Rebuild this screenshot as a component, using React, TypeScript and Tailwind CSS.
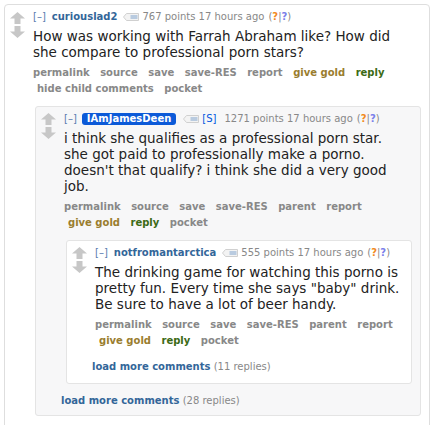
import React from "react";
import clsx from "clsx";

type Btn = { label: string; tone?: "gold" | "reply" };

const baseButtons: Btn[] = [
  { label: "permalink" },
  { label: "source" },
  { label: "save" },
  { label: "save-RES" },
];

function Arrows() {
  return (
    <div className="flex w-[15px] shrink-0 flex-col items-center gap-[2px] pt-[6.5px]">
      <svg width="15" height="12" viewBox="0 0 15 12">
        <path d="M7.5 0 L15 6.5 H10.5 V12 H4.5 V6.5 H0 Z" fill="#c7c7c7" />
      </svg>
      <svg width="15" height="12" viewBox="0 0 15 12">
        <path d="M7.5 12 L15 5.5 H10.5 V0 H4.5 V5.5 H0 Z" fill="#c7c7c7" />
      </svg>
    </div>
  );
}

function TagIcon() {
  return (
    <svg width="16" height="8" viewBox="0 0 16 8" className="shrink-0">
      <path d="M0.5 4 L3.5 0.5 H15.5 V7.5 H3.5 Z" fill="#f3f3f3" stroke="#d0d0d0" />
      <rect x="7.5" y="2" width="7" height="4" fill="#b9cbe0" />
    </svg>
  );
}

function Tagline({ author, points, submitter }: { author: string; points: string; submitter?: boolean }) {
  return (
    <div className="mt-[6px] flex items-center whitespace-nowrap text-[10px] leading-[12px] text-[#888]">
      <span className="text-[#5a7bb0]">[–]</span>
      {submitter ? (
        <span className="ml-[5px] rounded-[3px] bg-[#0c5ad8] px-[5px] font-bold text-white">{author}</span>
      ) : (
        <span className="ml-[6px] font-bold text-[#336699]">{author}</span>
      )}
      <span className={submitter ? "ml-[6.5px]" : "ml-[5.5px]"}>
        <TagIcon />
      </span>
      {submitter && <span className="ml-[3.5px] text-[#0055df]">[S]</span>}
      <span className={submitter ? "ml-[8px]" : "ml-[3.5px]"}>{points} points 17 hours ago</span>
      <span className="ml-[4px]">
        (<b className="text-[#f28a1e]">?</b>|<b className="text-[#7b80ea]">?</b>)
      </span>
    </div>
  );
}

function Buttons({ items }: { items: Btn[] }) {
  return (
    <ul className="mt-[4px] flex flex-wrap text-[10px] font-bold leading-[16px] text-[#888]">
      {items.map((b, i) => (
        <li
          key={b.label}
          className={clsx(
            i === 0 ? "pl-0" : "pl-[4px]",
            "mr-[2.5px] whitespace-nowrap pr-[4px]",
            b.tone === "gold" && "text-[#9a7d2e]",
            b.tone === "reply" && "text-[#3b6a14]"
          )}
        >
          {b.label}
        </li>
      ))}
    </ul>
  );
}

function Body({ children }: { children: React.ReactNode }) {
  return <p className="mt-[5px] text-[13.5px] leading-[16.3px] text-[#222]">{children}</p>;
}

function LoadMore({ replies }: { replies: number }) {
  return (
    <div className="-ml-[3px] text-[10px] leading-[14px] text-[#888]">
      <span className="font-bold text-[#336699]">load more comments</span> ({replies} replies)
    </div>
  );
}

export default function App() {
  return (
    <div className="h-[425px] overflow-hidden bg-white pl-[4px] pt-[4px] font-['DejaVu_Sans',Verdana,sans-serif]">
      <div className="w-[426px] rounded-[4px] border border-[#dedede] bg-white pb-[12px]">
        <div className="flex gap-[8px] pl-[5px]">
          <Arrows />
          <div className="flex-1">
            <div className="pr-[16px]">
              <Tagline author="curiouslad2" points="767" />
              <Body>How was working with Farrah Abraham like? How did she compare to professional porn stars?</Body>
              <Buttons
                items={[
                  ...baseButtons,
                  { label: "report" },
                  { label: "give gold", tone: "gold" },
                  { label: "reply", tone: "reply" },
                  { label: "hide child comments" },
                  { label: "pocket" },
                ]}
              />
            </div>

            {/* child */}
            <div className="ml-[2px] mr-[8px] mt-[9px] rounded-[3px] border border-[#e4e4e4] bg-[#f7f7f8] pb-[7.5px]">
              <div className="flex gap-[8px] pl-[5px]">
                <Arrows />
                <div className="flex-1">
                  <div className="pr-[14px]">
                    <Tagline author="IAmJamesDeen" points="1271" submitter />
                    <Body>
                      i think she qualifies as a professional porn star. she got paid to professionally make a porno.
                      doesn't that qualify? i think she did a very good job.
                    </Body>
                    <Buttons
                      items={[
                        ...baseButtons,
                        { label: "parent" },
                        { label: "report" },
                        { label: "give gold", tone: "gold" },
                        { label: "reply", tone: "reply" },
                        { label: "pocket" },
                      ]}
                    />
                  </div>

                  {/* grandchild */}
                  <div className="ml-[2px] mr-[8px] mt-[9px] rounded-[3px] border border-[#e4e4e4] bg-white pb-[9px]">
                    <div className="flex gap-[8px] pl-[5px]">
                      <Arrows />
                      <div className="flex-1">
                        <div className="pr-[8px]">
                          <Tagline author="notfromantarctica" points="555" />
                          <Body>
                            The drinking game for watching this porno is pretty fun. Every time she says "baby" drink.
                            Be sure to have a lot of beer handy.
                          </Body>
                          <Buttons
                            items={[
                              ...baseButtons,
                              { label: "parent" },
                              { label: "report" },
                              { label: "give gold", tone: "gold" },
                              { label: "reply", tone: "reply" },
                              { label: "pocket" },
                            ]}
                          />
                        </div>
                        <div className="mt-[11px]">
                          <LoadMore replies={11} />
                        </div>
                      </div>
                    </div>
                  </div>

                  <div className="mt-[10px]">
                    <LoadMore replies={28} />
                  </div>
                </div>
              </div>
            </div>
          </div>
        </div>
      </div>
    </div>
  );
}
